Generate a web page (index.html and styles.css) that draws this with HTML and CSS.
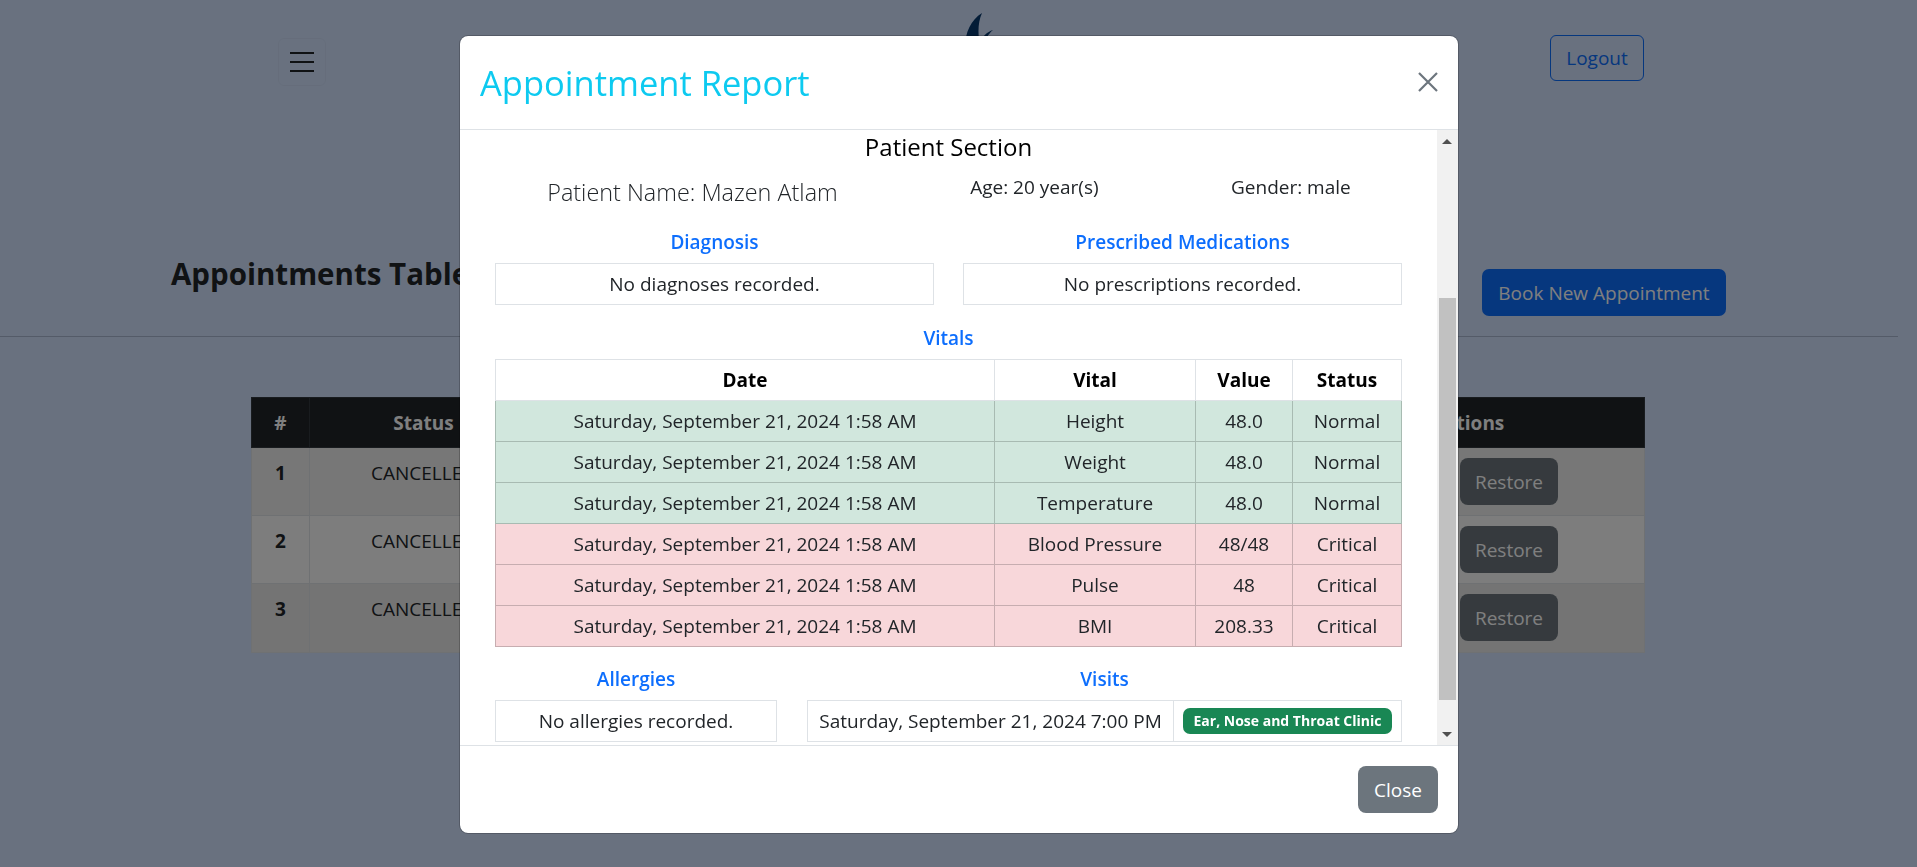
FILE: index.html
```html
<!DOCTYPE html>
<html lang="en">
<head>
<meta charset="utf-8">
<title>Appointment Report</title>
<link rel="stylesheet" href="styles.css">
</head>
<body>
<div class="page">
  <nav class="nav">
    <button class="toggler" aria-label="Menu"><span></span><span></span><span></span></button>
    <svg class="logo" width="60" height="60" viewBox="0 0 60 60"><path d="M37 1 C26 8 20 20 20 36 L36 36 C33 26 32 12 37 1 Z" fill="#07396f"/><path d="M48 18 C42 20 38 24 35 30 L38 36 C40 28 43 22 48 18 Z" fill="#07396f"/></svg>
    <button class="logout">Logout</button>
  </nav>
  <div class="title-row">
    <h2 class="page-title">Appointments Table</h2>
    <button class="book">Book New Appointment</button>
  </div>
  <hr class="rule">
  <table class="appts">
    <colgroup><col class="c-num"><col class="c-status"><col class="c-mid"><col class="c-act"></colgroup>
    <thead><tr><th>#</th><th>Status</th><th></th><th>Actions</th></tr></thead>
    <tbody>
      <tr><th>1</th><td>CANCELLED</td><td></td><td class="act"><button class="restore">Restore</button></td></tr>
      <tr><th>2</th><td>CANCELLED</td><td></td><td class="act"><button class="restore">Restore</button></td></tr>
      <tr><th>3</th><td>CANCELLED</td><td></td><td class="act"><button class="restore">Restore</button></td></tr>
    </tbody>
  </table>
</div>
<div class="backdrop">
  <section class="modal">
    <header class="modal-head">
      <h1 class="modal-title">Appointment Report</h1>
      <button class="x" aria-label="Close"><svg width="20" height="20" viewBox="0 0 20 20"><path d="M1 1 L19 19 M19 1 L1 19" stroke="#6c757d" stroke-width="2.2" fill="none"/></svg></button>
    </header>
    <div class="modal-body">
      <h4 class="section">Patient Section</h4>
      <div class="info">
        <span class="name">Patient Name: Mazen Atlam</span>
        <span>Age: 20 year(s)</span>
        <span>Gender: male</span>
      </div>
      <div class="two">
        <div><h6 class="label">Diagnosis</h6><div class="box">No diagnoses recorded.</div></div>
        <div><h6 class="label">Prescribed Medications</h6><div class="box">No prescriptions recorded.</div></div>
      </div>
      <h6 class="label vit">Vitals</h6>
      <table class="vitals">
        <colgroup><col class="v1"><col class="v2"><col class="v3"><col class="v4"></colgroup>
        <thead><tr><th>Date</th><th>Vital</th><th>Value</th><th>Status</th></tr></thead>
        <tbody>
          <tr class="ok"><td>Saturday, September 21, 2024 1:58 AM</td><td>Height</td><td>48.0</td><td>Normal</td></tr>
          <tr class="ok"><td>Saturday, September 21, 2024 1:58 AM</td><td>Weight</td><td>48.0</td><td>Normal</td></tr>
          <tr class="ok"><td>Saturday, September 21, 2024 1:58 AM</td><td>Temperature</td><td>48.0</td><td>Normal</td></tr>
          <tr class="bad"><td>Saturday, September 21, 2024 1:58 AM</td><td>Blood Pressure</td><td>48/48</td><td>Critical</td></tr>
          <tr class="bad"><td>Saturday, September 21, 2024 1:58 AM</td><td>Pulse</td><td>48</td><td>Critical</td></tr>
          <tr class="bad"><td>Saturday, September 21, 2024 1:58 AM</td><td>BMI</td><td>208.33</td><td>Critical</td></tr>
        </tbody>
      </table>
      <div class="lower">
        <div><h6 class="label">Allergies</h6><div class="box">No allergies recorded.</div></div>
        <div><h6 class="label">Visits</h6>
          <div class="visit"><span class="visit-date">Saturday, September 21, 2024 7:00 PM</span><span class="visit-tag"><span class="badge">Ear, Nose and Throat Clinic</span></span></div>
        </div>
      </div>
      <div class="scrollbar">
        <span class="arrow up"></span>
        <span class="thumb"></span>
        <span class="arrow down"></span>
      </div>
    </div>
    <footer class="modal-foot"><button class="close">Close</button></footer>
  </section>
</div>
</body>
</html>
```
FILE: styles.css
```css
* { box-sizing: border-box; }
html, body { height: 100%; }
body {
  margin: 0;
  overflow: hidden;
  background: #d2e2fe;
  color: #212529;
  font-family: "Open Sans", "Noto Sans", sans-serif;
  font-size: 19px;
}
button { font-family: inherit; font-size: 19px; cursor: pointer; }

.nav { display: flex; justify-content: space-between; align-items: flex-start; padding: 0 273px 0 278px; height: 86px; }
.toggler { width: 48px; height: 48px; margin-top: 38px; background: none; border: 1px solid rgba(33,37,41,.03); border-radius: 6px; display: flex; flex-direction: column; align-items: center; justify-content: center; gap: 7px; padding: 0; }
.toggler span { display: block; width: 24px; height: 2px; background: #212529; }
.logo { margin-top: 12px; margin-left: 74px; }
.logout { width: 94px; height: 46px; margin-top: 35px; background: none; border: 1px solid #0d6efd; border-radius: 6px; color: #0d6efd; padding: 0; }

.title-row { display: flex; justify-content: space-between; align-items: flex-start; padding: 0 191px 0 171px; margin-top: 168px; }
.page-title { margin: 0; font-size: 29.5px; line-height: 40px; font-weight: 700; color: #212529; }
.book { width: 244px; height: 47px; margin-top: 15px; background: #0d6efd; color: #fff; border: 0; border-radius: 7px; padding: 0; }
.rule { width: 1898px; height: 1px; margin: 20px 0 0; border: 0; background: #a8b6d0; }

.appts { width: 1393px; margin: 60px 0 0 251px; border-collapse: collapse; table-layout: fixed; }
.c-num { width: 58px; } .c-status { width: 228px; } .c-mid { width: 756px; } .c-act { width: 351px; }
.appts th, .appts td { text-align: center; vertical-align: top; border: 1px solid #dee2e6; padding: 12px 8px; line-height: 26px; }
.appts thead th { background: #212529; color: #fff; border-color: #32383e; font-weight: 700; padding: 12px 8px 11px; height: 50px; }
.appts tbody th { font-weight: 700; }
.appts tbody tr:nth-child(1) > * { background: #eeeeee; height: 68px; }
.appts tbody tr:nth-child(2) > * { background: #fafafa; height: 68px; }
.appts tbody tr:nth-child(3) > * { background: #e8e8e8; height: 69px; }
.appts td.act { text-align: left; padding: 10px 0 0 166px; }
.restore { width: 98px; height: 47px; background: #6c757d; color: #fff; border: 0; border-radius: 8px; padding: 0; display: block; }

.backdrop { position: fixed; inset: 0; background: rgba(0,0,0,.5); padding: 35px 0 0 459px; }
.modal { width: 1000px; height: 799px; background: #fff; border: 1px solid rgba(0,0,0,.2); border-radius: 9px; display: flex; flex-direction: column; overflow: hidden; background-clip: padding-box; }
.modal-head { height: 94px; flex: none; display: flex; justify-content: space-between; align-items: center; padding: 0 20px; border-bottom: 1px solid #dee2e6; }
.modal-title { margin: 0; color: #0dcaf0; font-size: 34.5px; line-height: 48px; font-weight: 400; }
.x { background: none; border: 0; padding: 0; width: 20px; height: 20px; display: block; margin-top: -1px; }
.x svg { display: block; }

.modal-body { position: relative; flex: 1; min-height: 0; overflow: hidden; padding: 0 56px 0 35px; text-align: center; }
.section { margin: 0; font-size: 24px; line-height: 34px; font-weight: 500; color: #000; }
.info { display: flex; justify-content: space-around; align-items: flex-start; margin: 10px -15px 0 -14px; height: 36px; line-height: 27px; }
.name { font-size: 23.4px; font-weight: 300; line-height: 36px; }
.two { display: grid; grid-template-columns: 439px 439px; column-gap: 29px; margin-top: 18px; }
.label { margin: 0 0 7px; padding-top: 1px; font-size: 19px; line-height: 27px; font-weight: 600; color: #0d6efd; }
.box { height: 42px; line-height: 40px; border: 1px solid #dee2e6; }
.vit { margin-top: 19px; }

.vitals { width: 906px; border-collapse: collapse; table-layout: fixed; }
.v1 { width: 499px; } .v2 { width: 201px; } .v3 { width: 97px; } .v4 { width: 109px; }
.vitals th, .vitals td { border: 1px solid #dee2e6; padding: 7px 0; line-height: 26px; text-align: center; font-weight: 400; }
.vitals th { font-weight: 700; color: #000; }
.ok td { background: #d1e7dd; border-color: #a8bbb2; }
.bad td { background: #f8d7da; border-color: #c7adb0; }

.lower { display: grid; grid-template-columns: 282px 595px; column-gap: 30px; margin-top: 18px; }
.visit { display: flex; height: 42px; border: 1px solid #dee2e6; }
.visit-date { width: 366px; line-height: 40px; border-right: 1px solid #dee2e6; flex: none; white-space: nowrap; }
.visit-tag { flex: 1; display: flex; align-items: center; justify-content: center; }
.badge { width: 209px; height: 26px; line-height: 26px; background: #198754; color: #fff; border-radius: 7px; font-size: 14px; font-weight: 700; white-space: nowrap; }

.scrollbar { position: absolute; top: 0; right: 0; bottom: 0; width: 21px; background: #f1f1f1; }
.thumb { position: absolute; left: 2px; top: 168px; width: 17px; height: 402px; background: #c1c1c1; }
.arrow { position: absolute; left: 5px; width: 0; height: 0; border-left: 5px solid transparent; border-right: 5px solid transparent; }
.arrow.up { top: 9px; border-bottom: 5px solid #505050; }
.arrow.down { bottom: 8px; border-top: 5px solid #505050; }

.modal-foot { flex: none; height: 88px; border-top: 1px solid #dee2e6; display: flex; justify-content: flex-end; align-items: flex-start; padding: 20px 20px 0 0; }
.close { width: 80px; height: 47px; background: #6c757d; color: #fff; border: 0; border-radius: 8px; padding: 0; }
```
